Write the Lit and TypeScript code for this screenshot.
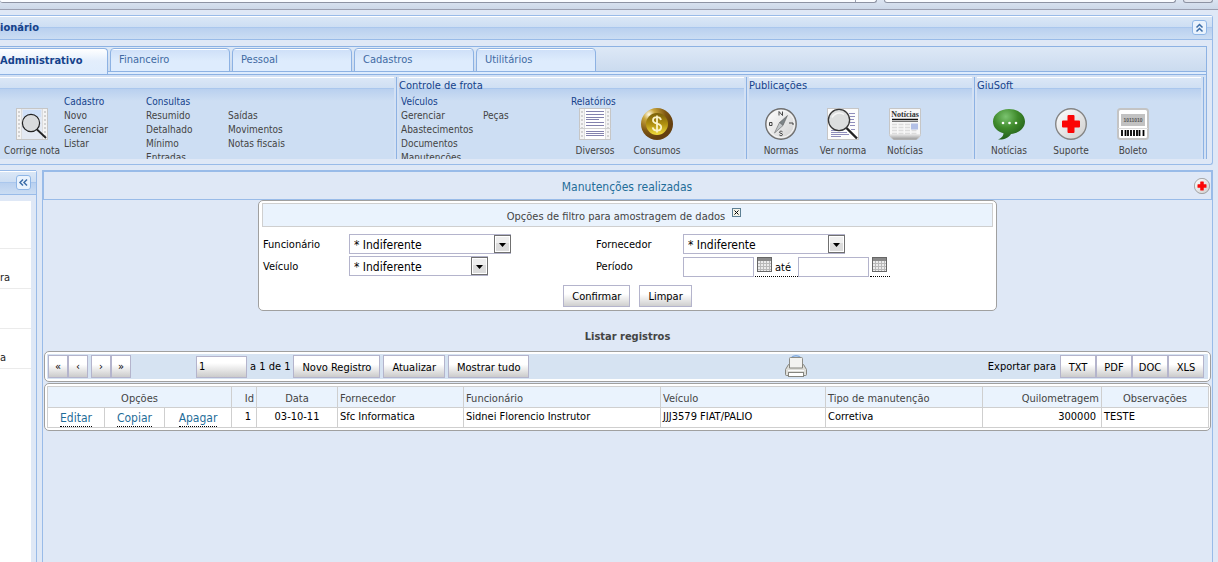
import { LitElement, html, css, svg, nothing } from "lit";
import { customElement, property, state } from "lit/decorators.js";
import { classMap } from "lit/directives/class-map.js";

const film = svg`
  <rect x="0.5" y="0.5" width="31" height="31" fill="#f4f4f4" stroke="#c6c6c6"/>
  <path d="M3 3v28M29 3v28" stroke="#d2d2d2" stroke-width="2" stroke-dasharray="2 2"/>
  <path d="M5.5 1v30M26.5 1v30" stroke="#dcdcdc"/>`;

const icons: Record<string, unknown> = {
  filmSearch: svg`${film}
    <rect x="6" y="1" width="20" height="30" fill="#e3e9f3"/>
    <rect x="7" y="2" width="18" height="7" fill="#cfe0f8"/>
    <circle cx="15" cy="15" r="8.6" fill="#d9dbdd" stroke="#222" stroke-width="1.200"/>
    <path d="M21 21.500l9 8.500" stroke="#222" stroke-width="1.800"/>`,
  report: svg`${film}
    <rect x="6" y="1" width="20" height="30" fill="#fff"/>
    <path d="M0 20.500h32" stroke="#cfcfcf"/>
    <path d="M7 3.500h18M7 6.500h18M7 9.500h18M7 11.500h13M7 14.500h18M7 17.500h18M7 23.500h18M7 25.500h18M7 27.500h18" stroke="#8382ad"/>`,
  coin: svg`
    <defs>
      <radialGradient id="rim" cx="0.25" cy="0.2" r="0.75"><stop offset="0" stop-color="#fffbe8"/><stop offset="0.25" stop-color="#c9a63c"/><stop offset="0.7" stop-color="#7d5512"/><stop offset="1" stop-color="#654010"/></radialGradient>
      <linearGradient id="face" x1="0" y1="0" x2="0" y2="1"><stop offset="0" stop-color="#7a6009"/><stop offset="0.500" stop-color="#b08f10"/><stop offset="1" stop-color="#f1dc3c"/></linearGradient>
    </defs>
    <circle cx="16" cy="16" r="16" fill="url(#rim)"/>
    <circle cx="16" cy="16" r="11" fill="url(#face)"/>
    <path d="M20 12c-.5-2-2-2.800-4-2.800-2.300 0-4 1-4 3 0 4.600 8.200 2.400 8.200 7 0 2.200-1.800 3.300-4.200 3.300s-4-1-4.300-3.200M16 7.500v17" fill="none" stroke="#fbf3c8" stroke-width="1.800"/>`,
  compass: svg`
    <defs><linearGradient id="dial" x1="0" y1="0" x2="1" y2="1"><stop offset="0" stop-color="#fff"/><stop offset="1" stop-color="#cfcfcf"/></linearGradient></defs>
    <circle cx="16" cy="16" r="15.200" fill="url(#dial)" stroke="#6f6f6f" stroke-width="1.400"/>
    <circle cx="16" cy="16" r="13.500" fill="none" stroke="#f7f7f7"/>
    <path d="M14 7.500v-4l3.500 4v-4M17.500 23.800c-1-1-3-.8-3 .5s3 .8 3 2.200-2.300 1.500-3.200.4M4.500 14.500h2.500v3h-2.500zM24 15h4v2" fill="none" stroke="#333" stroke-width="0.900"/>
    <path d="M22.500 7.500L18 17.500l-3.500-3z" fill="#7d8487" stroke="#555" stroke-width=".5"/>
    <path d="M9.500 25L14.500 14.500l3.500 3z" fill="#c3c8cb" stroke="#666" stroke-width=".6"/>`,
  docSearch: svg`
    <rect x="0.5" y="0.5" width="31" height="31" fill="#fcfcfc" stroke="#c6c6c6"/>
    <path d="M22 5.500h6M23 8.500h5M23 11.500h4M23 14.500h5M23 17.500h5M4 22.500h12M4 24.500h16M4 26.500h18M4 28.500h10M24 21.500h4" stroke="#8f8dbb"/>
    <circle cx="12" cy="12" r="10.600" fill="#dcdede" stroke="#383838" stroke-width="1.300"/>
    <path d="M5 9.500a8 8 0 0 1 12-3" fill="none" stroke="#f6f6f6" stroke-width="1.500"/>
    <path d="M19.500 20l10.500 10.500" stroke="#222" stroke-width="2.400"/>`,
  news: svg`
    <defs><linearGradient id="roll" x1="0" y1="0" x2="0" y2="1"><stop offset="0" stop-color="#ededed"/><stop offset="1" stop-color="#9a9a9a"/></linearGradient></defs>
    <path d="M.5.5h31V27q-1 3-4 4.500h-23Q1.500 30 .5 27z" fill="#f7f7f7" stroke="#c6c6c6"/>
    <path d="M.5 26h31q-1 4-4 5.500h-23Q1.500 30 .5 26z" fill="url(#roll)"/>
    <text x="16" y="9" text-anchor="middle" font-family="Liberation Serif, serif" font-size="8" font-weight="700" fill="#333">Notícias</text>
    <path d="M3 11.500h26" stroke="#111" stroke-width="1.500"/><path d="M3 13.500h26" stroke="#555" stroke-width=".8"/>
    <path d="M3 16.500h18M3 19.500h18M3 22.500h26M3 25.500h26" stroke="#dcdcdc" stroke-width="1.400" stroke-dasharray="5 1.500"/>
    <rect x="22" y="15.500" width="7" height="6" fill="#b3c0e6"/>`,
  chat: svg`
    <defs><radialGradient id="bubble" cx="0.4" cy="0.25" r="0.75"><stop offset="0" stop-color="#7bc470"/><stop offset="0.500" stop-color="#3f8a2b"/><stop offset="1" stop-color="#235e1a"/></radialGradient></defs>
    <path d="M16 1C7 1 0 6.500 0 13.500 0 19 4 23.500 10.500 25.300 10.500 28 8 30.500 5 31.500c6 .5 11-2 13-5.600C26 25.300 32 20 32 13.500 32 6.500 25 1 16 1z" fill="url(#bubble)"/>
    <circle cx="10" cy="15" r="1.300" fill="#fff"/><circle cx="16.500" cy="15" r="1.300" fill="#fff"/><circle cx="23" cy="15" r="1.300" fill="#fff"/>`,
  cross: svg`
    <defs><linearGradient id="disc" x1="0" y1="0" x2="1" y2="1"><stop offset="0" stop-color="#fff"/><stop offset="1" stop-color="#cdcdcd"/></linearGradient></defs>
    <circle cx="16" cy="16" r="15.300" fill="url(#disc)" stroke="#858585" stroke-width="1.400"/>
    <path d="M13.500 7h5q1 0 1 1v4.500H24q1 0 1 1v5q0 1-1 1h-4.500V24q0 1-1 1h-5q-1 0-1-1v-4.500H8q-1 0-1-1v-5q0-1 1-1h4.500V8q0-1 1-1z" fill="#fb0505"/>`,
  barcode: svg`
    <rect x="1" y="1" width="30" height="30" rx="2.500" fill="#fff" stroke="#c4c4c4" stroke-width="2"/>
    <rect x="4" y="6" width="24" height="12" fill="#c2c2c2"/>
    <text x="16" y="14" text-anchor="middle" font-family="Liberation Sans, sans-serif" font-size="5" font-weight="700" fill="#555">1011010</text>
    <path d="M1 20.500h30" stroke="#ddd"/>
    <path d="M5 22v6M8.500 22v6M11 22v6M14 22v6M17 22v6M20 22v6M22.500 22v6M26.500 22v6" stroke="#000" stroke-width="1.800"/>`,
};

const icon = (name: string, size: number) =>
  html`<svg width=${size} height=${size} viewBox="0 0 32 32" aria-hidden="true">${icons[name]}</svg>`;

const chevrons = (dir: "up" | "left") => html`
  <svg width="15" height="15" viewBox="0 0 15 15" aria-hidden="true">
    <rect x="0.5" y="0.5" width="14" height="14" rx="2.500" fill="#eaf3fd" stroke="#8fb6e6"/>
    <path d=${dir === "up" ? "M4.500 7.500l3-3 3 3M4.500 11.500l3-3 3 3" : "M7 4.500l-3 3 3 3M11 4.500l-3 3 3 3"}
      fill="none" stroke="#3c6da8" stroke-width="1.500"/>
  </svg>`;

const calendar = html`
  <svg width="15" height="15" viewBox="0 0 15 15" aria-hidden="true">
    <rect x="0.5" y="0.5" width="14" height="14" fill="#ececec" stroke="#666"/>
    <rect x="1" y="1" width="13" height="3" fill="#8a8a8a"/>
    <path d="M1 6.500h13M1 9.500h13M1 12.500h13M3.500 4v10M6.500 4v10M9.500 4v10M12.500 4v10" stroke="#b9b9b9"/>
  </svg>`;

const printer = html`
  <svg width="22" height="23" viewBox="0 0 22 23" aria-hidden="true">
    <path d="M7 2q4-2.500 8 0" fill="none" stroke="#86aee0" stroke-width="1.500"/>
    <rect x="4.500" y="2.500" width="13" height="11" rx="1" fill="#f3f3f1" stroke="#8d8d88"/>
    <path d="M3.500 9.500h1v3.500h13v-3.500h1l3 5v5q0 1-1 1h-19q-1 0-1-1v-5z" fill="#dededa" stroke="#85857f"/>
    <rect x="3.500" y="17.500" width="15" height="4" fill="#fff" stroke="#85857f"/>
    <path d="M3 15.500h16" stroke="#fafafa"/>
  </svg>`;

type Column = { title?: string; links: string[] };
type Tool = { icon: string; label: string };
type Block = { columns?: Column[]; tools?: Tool[]; heading?: string };
type Group = { title: string; kind: string; blocks: Block[] };

const groups: Group[] = [
  {
    title: "", kind: "first",
    blocks: [
      { tools: [{ icon: "filmSearch", label: "Corrige nota" }] },
      {
        columns: [
          { title: "Cadastro", links: ["Novo", "Gerenciar", "Listar"] },
          { title: "Consultas", links: ["Resumido", "Detalhado", "Mínimo", "Entradas"] },
          { links: ["Saídas", "Movimentos", "Notas fiscais"] },
        ],
      },
    ],
  },
  {
    title: "Controle de frota", kind: "fleet",
    blocks: [
      {
        columns: [
          { title: "Veículos", links: ["Gerenciar", "Abastecimentos", "Documentos", "Manutenções"] },
          { links: ["Peças"] },
        ],
      },
      { heading: "Relatórios", tools: [{ icon: "report", label: "Diversos" }, { icon: "coin", label: "Consumos" }] },
    ],
  },
  {
    title: "Publicações", kind: "publications",
    blocks: [{ tools: [{ icon: "compass", label: "Normas" }, { icon: "docSearch", label: "Ver norma" }, { icon: "news", label: "Notícias" }] }],
  },
  {
    title: "GiuSoft", kind: "vendor",
    blocks: [{ tools: [{ icon: "chat", label: "Notícias" }, { icon: "cross", label: "Suporte" }, { icon: "barcode", label: "Boleto" }] }],
  },
];

const shared = css`
  * { box-sizing: border-box; }
  button, input, select { font: inherit; margin: 0; }
  svg { display: block; flex: none; }
  .bar {
    display: flex; align-items: center; justify-content: space-between;
    height: 25px; flex: none;
    border-bottom: 1px solid #99bbe8;
    border-top: 1px solid #99bbe8;
    background: linear-gradient(#fff 0 1px, #dae7f6 1px, #cddef3 11px, #aac7ed 11px 12px, #b9d0ef 12px, #cbddf3 23px);
  }
  .icon-button { border: 0; padding: 0; background: none; cursor: pointer; }
`;

@customElement("ribbon-bar")
export class RibbonBar extends LitElement {
  @state() private active = "Administrativo";
  private tabs = ["Administrativo", "Financeiro", "Pessoal", "Cadastros", "Utilitários"];

  static styles = [shared, css`
    :host { display: block; border-right: 1px solid #99bbe8; border-bottom: 1px solid #99bbe8; border-radius: 0 3px 3px 0; overflow: hidden; background: #dfe8f6; }
    h1 { margin: 0; padding-top: 1px; font-size: 11px; line-height: 14px; color: #15428b; }
    .bar { padding-right: 5px; }
    .frame { margin: 6px 5px 5px 0; border: solid #8db2e3; border-width: 1px 1px 0 0; }
    .tabs { display: flex; gap: 2px; height: 25px; padding-top: 1px; border-bottom: 1px solid #8db2e3; background: linear-gradient(#dde8f6, #cbdbef); }
    .tab { width: 120px; height: 24px; padding: 0 8px; border: 1px solid #8db2e3; border-radius: 4px 4px 0 0; background: linear-gradient(#fff 0 1px, #cfe0f8 1px, #deecfd 12px); color: #416aa3; font-size: 11px; line-height: 22px; text-align: left; }
    .tab.on { width: 108px; height: 26px; padding: 0 0 2px; border-left: 0; border-bottom: 0; border-radius: 0 4px 0 0; background: linear-gradient(#fff, #e3eefc 12px, #deecfd); color: #15428b; font-weight: 700; }
    .spacer { height: 3px; border-bottom: 1px solid #8db2e3; background: #deecfd; }
    .groups { display: flex; height: 84px; padding: 2px 2px 0 0; background: #d3e1f4; }
    .group { flex: none; padding-right: 2px; border-right: 1px solid #8db2e3; overflow: hidden; }
    .group + .group { padding-left: 2px; }
    .first { width: 397px; }
    .fleet { width: 350px; }
    .publications { width: 228px; }
    .vendor { flex: 1; }
    h2 { margin: 0; height: 12px; padding-top: 2px; font-size: 11px; line-height: 14px; font-weight: 400; color: #15428b; white-space: nowrap; background: linear-gradient(#fff 0 1px, #dbe7f6 1px, #cfdff3 11px, #aac7ed 11px); }
    .group-body { display: flex; height: 70px; padding-top: 6px; background: linear-gradient(#b9d0ef, #cddef3 12px); font-size: 10px; overflow: hidden; }
    .columns { display: flex; }
    .column { width: 82px; padding-top: 14px; display: flex; flex-direction: column; }
    .column.titled { padding-top: 0; }
    .first .column { padding-left: 1px; }
    .fleet .column { padding-left: 2px; }
    a, h3 { margin: 0; color: #444; font-size: 10px; font-weight: 400; line-height: 14px; text-decoration: none; white-space: nowrap; }
    h3 { color: #15428b; }
    .tool-block { padding: 13px 0 0 1px; }
    .tool-block.headed { padding-top: 0; }
    .headed h3 { height: 13px; padding-left: 7px; }
    .tools { display: flex; }
    .tool { width: 62px; padding: 0; border: 0; background: none; display: flex; flex-direction: column; align-items: center; gap: 4px; color: #444; line-height: 14px; white-space: nowrap; }
  `];

  private block(b: Block) {
    if (b.columns) {
      return html`<div class="columns">${b.columns.map((c) => html`
        <div class=${classMap({ column: true, titled: !!c.title })}>
          ${c.title ? html`<h3>${c.title}</h3>` : nothing}
          ${c.links.map((l) => html`<a href="#">${l}</a>`)}
        </div>`)}</div>`;
    }
    return html`
      <div class=${classMap({ "tool-block": true, headed: !!b.heading })}>
        ${b.heading ? html`<h3>${b.heading}</h3>` : nothing}
        <div class="tools">${b.tools!.map((t) => html`
          <button class="tool" type="button">${icon(t.icon, 32)}<span>${t.label}</span></button>`)}</div>
      </div>`;
  }

  render() {
    return html`
      <div class="bar"><h1>ionário</h1><button class="icon-button" type="button" aria-label="Recolher">${chevrons("up")}</button></div>
      <div class="frame">
        <div class="tabs" role="tablist">${this.tabs.map((t) => html`
          <button type="button" role="tab" aria-selected=${t === this.active}
            class=${classMap({ tab: true, on: t === this.active })} @click=${() => (this.active = t)}>${t}</button>`)}
        </div>
        <div class="spacer"></div>
        <div class="groups">${groups.map((g) => html`
          <section class="group ${g.kind}"><h2>${g.title}</h2><div class="group-body">${g.blocks.map((b) => this.block(b))}</div></section>`)}
        </div>
      </div>`;
  }
}

@customElement("filter-form")
export class FilterForm extends LitElement {
  static styles = [shared, css`
    :host { display: block; width: 739px; max-width: 100%; margin: 0 auto; padding: 2px 3px 3px; border: 1px solid #a0a0a0; border-radius: 5px; background: #fff; }
    .caption { display: flex; justify-content: center; gap: 7px; height: 24px; padding-right: 7px; border: 1px solid #cfcfcf; background: #eaf3fd; color: #444; line-height: 25px; }
    .caption .icon-button { height: 9px; margin-top: 4px; }
    .fields { display: grid; grid-template-columns: 86px 247px 87px 1fr; grid-auto-rows: 22px; padding: 7px 0 0 1px; }
    label { line-height: 22px; }
    .select { position: relative; display: block; width: 162px; height: 20px; }
    .select.narrow { width: 139px; }
    select { width: 100%; height: 20px; padding: 1px 20px 0 4px; border: 1px solid #b4b4cc; border-radius: 0; background: #fff; color: #000; font-size: 12px; appearance: none; }
    .select svg { position: absolute; right: 0; top: 1px; pointer-events: none; }
    .period { display: flex; align-items: flex-end; height: 21px; }
    .period input { width: 71px; height: 20px; padding: 0 2px; border: 1px solid #b4b4cc; background: #fff; }
    .pick { display: flex; gap: 3px; height: 21px; padding: 1px 3px 0 2px; margin-left: 1px; border-bottom: 1px dotted #000; }
    .pick.with-text { padding-right: 7px; }
    .actions { display: flex; justify-content: center; gap: 9px; margin-top: 7px; }
    .push { height: 22px; padding: 1px 8px 0; border: 1px solid #b4b4cc; background: linear-gradient(#fff 40%, #cfcfcf); color: #000; }
  `];

  private dropdown(id: string, narrow = false) {
    return html`<span class=${classMap({ select: true, narrow })}>
      <select id=${id}><option>* Indiferente</option></select>
      <svg width="17" height="18" viewBox="0 0 17 18" aria-hidden="true">
        <rect x="0.5" y="0.5" width="16" height="17" fill="#fff" stroke="#707070"/>
        <path d="M2 8h13v8H2z" fill="#dcdcdc"/><path d="M2 2h13v6H2z" fill="#efefef"/>
        <path d="M5 8h7l-3.500 4z" fill="#000"/>
      </svg></span>`;
  }

  render() {
    return html`
      <div class="caption"><span>Opções de filtro para amostragem de dados</span>
        <button class="icon-button" type="button" aria-label="Fechar">
          <svg width="9" height="9" viewBox="0 0 9 9"><rect x="0.5" y="0.5" width="8" height="8" fill="#f4f4ea" stroke="#5d7f93"/><path d="M2.500 2.500l4 4M6.500 2.500l-4 4" stroke="#000" stroke-width="1"/></svg>
        </button></div>
      <form @submit=${(e: Event) => e.preventDefault()}>
        <div class="fields">
          <label for="employee">Funcionário</label>${this.dropdown("employee")}
          <label for="supplier">Fornecedor</label>${this.dropdown("supplier")}
          <label for="vehicle">Veículo</label>${this.dropdown("vehicle", true)}
          <label for="from">Período</label>
          <div class="period">
            <input id="from" type="text">
            <span class="pick with-text">${calendar}<label for="until">até</label></span>
            <input id="until" type="text">
            <span class="pick">${calendar}</span>
          </div>
        </div>
        <div class="actions"><button class="push">Confirmar</button><button class="push" type="reset">Limpar</button></div>
      </form>`;
  }
}

@customElement("record-list")
export class RecordList extends LitElement {
  @property({ type: Array }) rows = [
    { id: 1, date: "03-10-11", supplier: "Sfc Informatica", employee: "Sidnei Florencio Instrutor", vehicle: "JJJ3579 FIAT/PALIO", kind: "Corretiva", km: 300000, notes: "TESTE" },
  ];

  static styles = [shared, css`
    :host { display: block; }
    h2 { margin: 0; padding-top: 12px; font-size: 11px; line-height: 28px; text-align: center; color: #444; }
    .box { margin: 0 1px 1px; padding: 2px; border: 1px solid #a0a0a0; border-radius: 5px; background: #fff; }
    .toolbar { display: grid; grid-template-columns: 13fr auto 7fr; align-items: center; height: 25px; padding: 0 4px 0 1px; background: #d6e3f2; }
    .left, .right { display: flex; align-items: center; }
    .left { gap: 3px; }
    .right { justify-content: flex-end; gap: 4px; }
    .run { display: flex; }
    .pages { display: flex; gap: 3px; margin-right: 62px; }
    button.push { height: 23px; padding: 1px 8px 0; border: 1px solid #b4b4cc; background: linear-gradient(#fff 40%, #cbcbcb); color: #000; white-space: nowrap; }
    .pages button.push { width: 20px; padding: 0; }
    .run.formats button.push { width: 36px; padding: 1px 0 0; }
    .page { width: 51px; height: 22px; padding: 0 2px; border: 1px solid #b4b4cc; background: linear-gradient(#fff 30%, #cbcbcb); }
    table { width: 100%; table-layout: fixed; border-collapse: collapse; }
    th, td { height: 20px; padding: 1px 2px 0; border: 1px solid #cfcfcf; font-weight: 400; text-align: left; white-space: nowrap; overflow: hidden; line-height: 16px; }
    th { height: 21px; padding-top: 3px; background: #eaf3fd; color: #444; }
    td { background: #fff; color: #000; vertical-align: top; }
    .center { text-align: center; }
    .num { text-align: right; }
    td.num { padding-right: 5px; }
    td.link { padding-top: 2px; font-size: 12px; text-align: center; }
    a { display: inline-block; height: 16px; color: #1f6d99; line-height: 15px; text-decoration: none; border-bottom: 1px dotted #000; }
    .c-edit { width: 57px; } .c-copy { width: 60px; } .c-drop { width: 67px; } .c-id { width: 25px; }
    .c-date { width: 81px; } .c-supplier { width: 126px; } .c-employee { width: 197px; } .c-vehicle { width: 165px; }
    .c-kind { width: 157px; } .c-km { width: 119px; } .c-notes { width: 107px; }
  `];

  render() {
    const cols = ["edit", "copy", "drop", "id", "date", "supplier", "employee", "vehicle", "kind", "km", "notes"];
    const push = (t: string) => html`<button class="push" type="button">${t}</button>`;
    return html`
      <h2>Listar registros</h2>
      <div class="box"><div class="toolbar">
        <div class="left">
          <div class="pages"><div class="run">${["«", "‹"].map(push)}</div><div class="run">${["›", "»"].map(push)}</div></div>
          <input class="page" type="text" value="1" aria-label="Página"><span>a 1 de 1</span>
          ${["Novo Registro", "Atualizar", "Mostrar tudo"].map(push)}
        </div>
        <button class="icon-button" type="button" aria-label="Imprimir">${printer}</button>
        <div class="right"><span>Exportar para</span><div class="run formats">${["TXT", "PDF", "DOC", "XLS"].map(push)}</div></div>
      </div></div>
      <div class="box"><table>
        <colgroup>${cols.map((c) => html`<col class="c-${c}">`)}</colgroup>
        <thead><tr>
          <th colspan="3" class="center">Opções</th><th class="num">Id</th><th class="center">Data</th>
          <th>Fornecedor</th><th>Funcionário</th><th>Veículo</th><th>Tipo de manutenção</th><th class="num">Quilometragem</th><th class="center">Observações</th>
        </tr></thead>
        <tbody>${this.rows.map((r) => html`<tr>
          ${["Editar", "Copiar", "Apagar"].map((t) => html`<td class="link"><a href="#">${t}</a></td>`)}
          <td class="num">${r.id}</td><td class="center">${r.date}</td><td>${r.supplier}</td><td>${r.employee}</td>
          <td>${r.vehicle}</td><td>${r.kind}</td><td class="num">${r.km}</td><td>${r.notes}</td>
        </tr>`)}</tbody>
      </table></div>`;
  }
}

@customElement("app-root")
export class AppRoot extends LitElement {
  static styles = [shared, css`
    :host { display: flex; flex-direction: column; height: 100vh; overflow: hidden; background: #dfe8f6; color: #000; font: 11px "DejaVu Sans Condensed", "Noto Sans", sans-serif; }
    .browser { display: flex; gap: 7px; height: 10px; flex: none; padding-right: 5px; border-bottom: 1px solid #9a9fb0; background: linear-gradient(#dbe4f1, #cdd8e8); }
    .browser span { height: 3px; border: solid #8d93a3; border-width: 0 1px 1px 0; border-radius: 0 0 3px 3px; background: #fafcff; }
    .address { flex: 1; display: flex; justify-content: flex-end; }
    .browser i { width: 21px; border-left: 1px solid #9a9fb0; }
    .browser .search { width: 292px; border-left-width: 1px; }
    .browser .menu { width: 30px; border-left-width: 1px; background: #e3e6ee; }
    ribbon-bar { flex: none; margin: 5px 5px 5px 0; }
    .work { flex: 1; display: flex; gap: 5px; min-height: 0; padding-right: 5px; }
    .side { width: 37px; flex: none; display: flex; flex-direction: column; border-right: 1px solid #99bbe8; border-radius: 0 3px 0 0; }
    .side .bar { justify-content: flex-end; padding-right: 5px; }
    ul { flex: 1; list-style: none; margin: 6px 5px 0 0; padding: 8px 0 0; background: #fff; }
    li { height: 40px; padding-top: 21px; border-bottom: 1px solid #ebebeb; line-height: 16px; color: #222; }
    main { flex: 1; min-width: 0; border: 1px solid #99bbe8; border-bottom: 0; }
    .title { display: grid; grid-template-columns: 16px 1fr 16px; align-items: center; height: 29px; padding-right: 1px; border: 1px solid #99bbe8; }
    h1 { grid-column: 2; margin: 0; padding-top: 3px; font-size: 12px; font-weight: 400; line-height: 24px; text-align: center; color: #1f6d99; }
  `];

  render() {
    return html`
      <div class="browser"><span class="address"><i></i></span><span class="search"></span><span class="menu"></span></div>
      <ribbon-bar></ribbon-bar>
      <div class="work">
        <aside class="side">
          <div class="bar"><button class="icon-button" type="button" aria-label="Recolher menu">${chevrons("left")}</button></div>
          <ul>${["", "ra", "", "a"].map((t) => html`<li>${t}</li>`)}</ul>
        </aside>
        <main>
          <div class="title"><h1>Manutenções realizadas</h1>
            <button class="icon-button" type="button" aria-label="Ajuda">${icon("cross", 16)}</button></div>
          <filter-form></filter-form>
          <record-list></record-list>
        </main>
      </div>`;
  }
}
